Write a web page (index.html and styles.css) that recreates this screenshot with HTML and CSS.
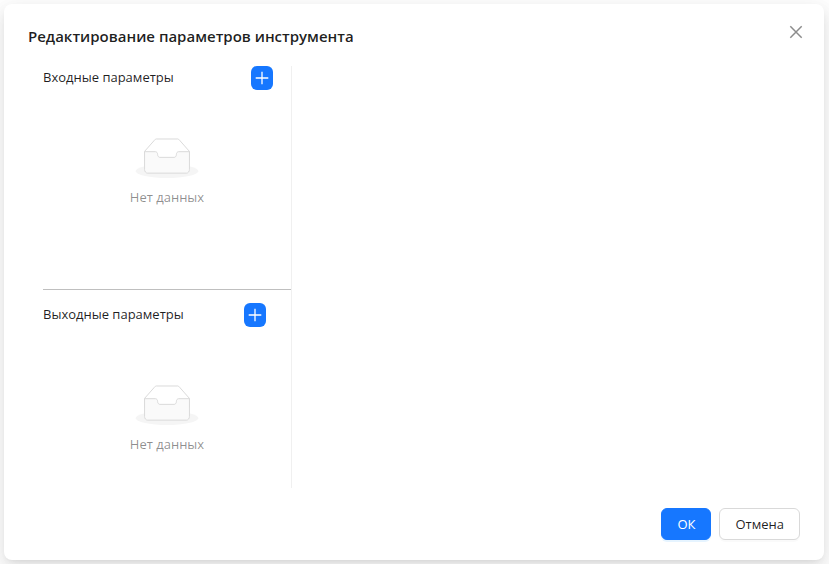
FILE: index.html
```html
<!DOCTYPE html>
<html lang="ru">
<head>
    <meta charset="UTF-8">
    <meta name="viewport" content="width=device-width, initial-scale=1.0">
    <title>Редактирование параметров инструмента</title>
    <link rel="stylesheet" href="styles.css">
</head>
<body>
    <div class="modal" role="dialog" aria-labelledby="modal-title">
        <header class="modal-header">
            <h1 class="modal-title" id="modal-title">Редактирование параметров инструмента</h1>
            <button type="button" class="close-button" aria-label="Закрыть">
                <svg width="16" height="16" viewBox="0 0 16 16" fill="none" stroke="currentColor" stroke-width="1.5">
                    <path d="M2.3 2.3L13.7 13.7M13.7 2.3L2.3 13.7"/>
                </svg>
            </button>
        </header>

        <main class="modal-body">
            <div class="sidebar">
                <section class="params params-input">
                    <div class="params-header">
                        <h2 class="params-title">Входные параметры</h2>
                        <button type="button" class="add-button" aria-label="Добавить входной параметр">
                            <svg width="16" height="16" viewBox="0 0 16 16" fill="none" stroke="currentColor" stroke-width="1.3">
                                <path d="M8 1.7V14.3M1.7 8H14.3"/>
                            </svg>
                        </button>
                    </div>
                    <div class="empty">
                        <svg class="empty-image" width="64" height="41" viewBox="0 0 64 41">
                            <g transform="translate(0 1)" fill="none" fill-rule="evenodd">
                                <ellipse fill="#f5f5f5" cx="32" cy="33" rx="32" ry="7"/>
                                <g fill-rule="nonzero" stroke="#d9d9d9">
                                    <path d="M55 12.76L44.854 1.258C44.367.474 43.656 0 42.907 0H21.093c-.749 0-1.46.474-1.947 1.257L9 12.761V22h46v-9.24z"/>
                                    <path fill="#fafafa" d="M41.613 15.931c0-1.605.994-2.93 2.227-2.931H55v18.137C55 33.26 53.68 35 52.05 35h-40.1C10.32 35 9 33.259 9 31.137V13h11.16c1.233 0 2.227 1.323 2.227 2.928v.022c0 1.605 1.005 2.901 2.237 2.901h14.752c1.232 0 2.237-1.308 2.237-2.913v-.007z"/>
                                </g>
                            </g>
                        </svg>
                        <p>Нет данных</p>
                    </div>
                </section>

                <section class="params params-output">
                    <div class="params-header">
                        <h2 class="params-title">Выходные параметры</h2>
                        <button type="button" class="add-button" aria-label="Добавить выходной параметр">
                            <svg width="16" height="16" viewBox="0 0 16 16" fill="none" stroke="currentColor" stroke-width="1.3">
                                <path d="M8 1.7V14.3M1.7 8H14.3"/>
                            </svg>
                        </button>
                    </div>
                    <div class="empty">
                        <svg class="empty-image" width="64" height="41" viewBox="0 0 64 41">
                            <g transform="translate(0 1)" fill="none" fill-rule="evenodd">
                                <ellipse fill="#f5f5f5" cx="32" cy="33" rx="32" ry="7"/>
                                <g fill-rule="nonzero" stroke="#d9d9d9">
                                    <path d="M55 12.76L44.854 1.258C44.367.474 43.656 0 42.907 0H21.093c-.749 0-1.46.474-1.947 1.257L9 12.761V22h46v-9.24z"/>
                                    <path fill="#fafafa" d="M41.613 15.931c0-1.605.994-2.93 2.227-2.931H55v18.137C55 33.26 53.68 35 52.05 35h-40.1C10.32 35 9 33.259 9 31.137V13h11.16c1.233 0 2.227 1.323 2.227 2.928v.022c0 1.605 1.005 2.901 2.237 2.901h14.752c1.232 0 2.237-1.308 2.237-2.913v-.007z"/>
                                </g>
                            </g>
                        </svg>
                        <p>Нет данных</p>
                    </div>
                </section>
            </div>
            <div class="content"></div>
        </main>

        <footer class="modal-footer">
            <button type="button" class="button button-primary">ОК</button>
            <button type="button" class="button">Отмена</button>
        </footer>
    </div>
</body>
</html>
```

FILE: styles.css
```css
/* Reset default browser styling */
* {
    margin: 0;
    padding: 0;
    box-sizing: border-box;
}

body {
    min-height: 100vh;
    display: flex;
    padding: 4px 5px 4px 4px;
    font-family: 'Segoe UI', 'Open Sans', 'Noto Sans', sans-serif;
    font-size: 13px;
    line-height: 22px;
    color: rgba(0, 0, 0, 0.88);
    background-color: #fff;
}

button {
    font: inherit;
    cursor: pointer;
}

svg {
    display: block;
}

/* Modal window */
.modal {
    flex: 1;
    display: flex;
    flex-direction: column;
    padding: 20px 24px;
    background-color: #fff;
    border-radius: 8px;
    box-shadow: 0 6px 16px 0 rgba(0, 0, 0, 0.08),
        0 3px 6px -4px rgba(0, 0, 0, 0.12),
        0 9px 28px 8px rgba(0, 0, 0, 0.05);
}

.modal-header {
    display: flex;
    justify-content: space-between;
    align-items: flex-start;
    margin-bottom: 18px;
}

.modal-title {
    font-size: 15px;
    font-weight: 600;
    line-height: 24px;
}

.close-button {
    margin: -4px -8px 0 0;
    padding: 4px;
    border: none;
    background: none;
    color: rgba(0, 0, 0, 0.45);
}

.modal-body {
    flex: 1;
    display: flex;
    padding-left: 15px;
}

/* Parameter lists */
.sidebar {
    width: 249px;
    border-right: 1px solid #f0f0f0;
}

.content {
    flex: 1;
}

.params-input {
    height: 224px;
    border-bottom: 1px solid #bfbfbf;
}

.params-output {
    padding-top: 13px;
}

.params-header {
    display: flex;
    justify-content: space-between;
    padding-right: 18px;
}

.params-output .params-header {
    padding-right: 25px;
}

.params-title {
    font-size: 13px;
    font-weight: 400;
    line-height: 22px;
}

.add-button {
    display: flex;
    align-items: center;
    justify-content: center;
    width: 22px;
    height: 24px;
    border: none;
    border-radius: 6px;
    background-color: #1677ff;
    color: #fff;
}

/* Empty state */
.empty {
    padding-top: 48px;
    text-align: center;
    color: rgba(0, 0, 0, 0.45);
}

.params-output .empty {
    padding-top: 58px;
}

.empty-image {
    height: 40px;
    margin: 0 auto 8px;
}

/* Footer buttons */
.modal-footer {
    display: flex;
    justify-content: flex-end;
    gap: 8px;
    margin-top: 20px;
}

.button {
    height: 32px;
    padding: 0 15px;
    border: 1px solid #d9d9d9;
    border-radius: 6px;
    background-color: #fff;
    color: rgba(0, 0, 0, 0.88);
    box-shadow: 0 2px 0 rgba(0, 0, 0, 0.02);
}

.button-primary {
    border-color: #1677ff;
    background-color: #1677ff;
    color: #fff;
    box-shadow: 0 2px 0 rgba(5, 145, 255, 0.1);
}
```
